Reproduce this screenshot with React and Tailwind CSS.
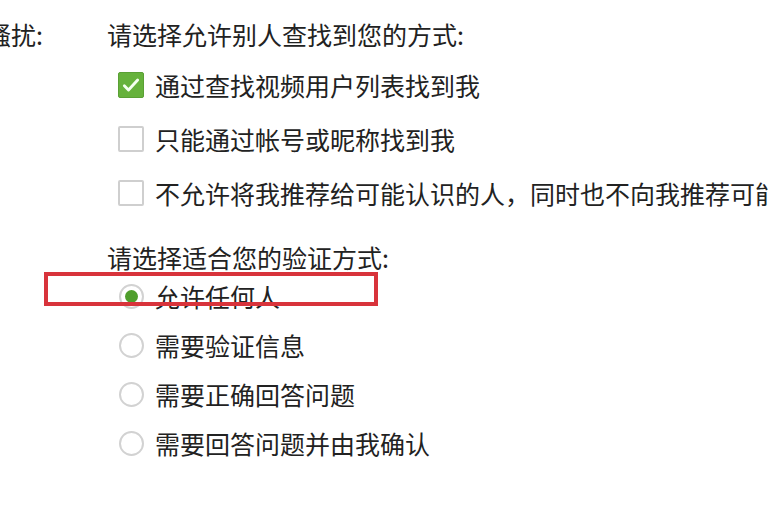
import React from 'react';

const font = { fontFamily: '"Noto Sans CJK SC", "Noto Sans", sans-serif' };

function CheckBox({ checked }) {
  if (checked) {
    return (
      <span className="w-[26px] h-[26px] shrink-0 rounded-[2px] bg-[#66b23c] border border-[#5aa035] flex items-center justify-center">
        <svg viewBox="0 0 24 24" className="w-[20px] h-[20px]" fill="none" stroke="#f4fff0" strokeWidth="3.4" strokeLinecap="round" strokeLinejoin="round">
          <path d="M4 13l5 5L20 6" />
        </svg>
      </span>
    );
  }
  return <span className="w-[26px] h-[26px] shrink-0 rounded-[2px] border-2 border-[#cfcfcf] bg-white" />;
}

function Radio({ checked }) {
  return (
    <span className="w-[25px] h-[25px] shrink-0 rounded-full border-2 border-[#d2d2d2] bg-white flex items-center justify-center">
      {checked && <span className="w-[13px] h-[13px] rounded-full bg-[#4f9e2c]" />}
    </span>
  );
}

function Row({ children, control }) {
  return (
    <div className="flex items-center gap-[11px] h-[30px] whitespace-nowrap">
      {control}
      <span className="text-[25px] leading-[30px] text-[#222]">{children}</span>
    </div>
  );
}

export default function App() {
  const finds = [
    { label: '通过查找视频用户列表找到我', checked: true },
    { label: '只能通过帐号或昵称找到我', checked: false },
    { label: '不允许将我推荐给可能认识的人，同时也不向我推荐可能认识的人', checked: false },
  ];
  const verify = [
    { label: '允许任何人', checked: true },
    { label: '需要验证信息', checked: false },
    { label: '需要正确回答问题', checked: false },
    { label: '需要回答问题并由我确认', checked: false },
  ];

  return (
    <div className="relative w-[768px] h-[510px] bg-white overflow-hidden" style={font}>
      <div className="flex pt-[19px]">
        <div className="w-[43px] shrink-0 flex justify-end">
          <span className="whitespace-nowrap text-[25px] leading-[30px] text-[#222]">防骚扰:</span>
        </div>
        <div className="ml-[64px] flex flex-col">
          <div className="text-[25px] leading-[30px] text-[#222] whitespace-nowrap">请选择允许别人查找到您的方式:</div>
          <div className="mt-[21px] ml-[11px] flex flex-col gap-[24px]">
            {finds.map((f) => (
              <Row key={f.label} control={<CheckBox checked={f.checked} />}>{f.label}</Row>
            ))}
          </div>
          <div className="mt-[34px] text-[25px] leading-[30px] text-[#222] whitespace-nowrap">请选择适合您的验证方式:</div>
          <div className="mt-[9px] ml-[12px] flex flex-col gap-[19px]">
            {verify.map((v) => (
              <Row key={v.label} control={<Radio checked={v.checked} />}>{v.label}</Row>
            ))}
          </div>
        </div>
      </div>
      <div className="absolute left-[44px] top-[272px] w-[334px] h-[34px] border-[4px] border-[#d8333b]" />
    </div>
  );
}
